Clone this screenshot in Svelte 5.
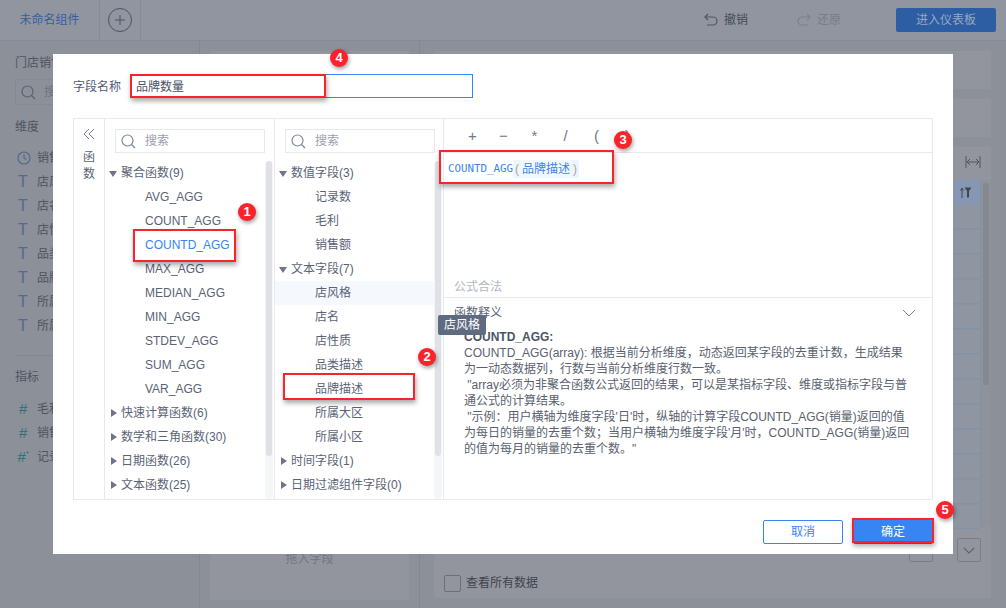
<script>
  const dims = ['店风格', '店名', '店性质', '品类描述', '品牌描述', '所属大区', '所属小区'];
  const measures = [
    { name: '毛利', star: false },
    { name: '销售额', star: false },
    { name: '记录数', star: true },
  ];
  const rows = Array.from({ length: 13 });

  const funcs = [
    { type: 'group', open: true, text: '聚合函数(9)' },
    { text: 'AVG_AGG' },
    { text: 'COUNT_AGG' },
    { text: 'COUNTD_AGG', active: true },
    { text: 'MAX_AGG' },
    { text: 'MEDIAN_AGG' },
    { text: 'MIN_AGG' },
    { text: 'STDEV_AGG' },
    { text: 'SUM_AGG' },
    { text: 'VAR_AGG' },
    { type: 'group', text: '快速计算函数(6)' },
    { type: 'group', text: '数学和三角函数(30)' },
    { type: 'group', text: '日期函数(26)' },
    { type: 'group', text: '文本函数(25)' },
  ];

  const fields = [
    { type: 'group', open: true, text: '数值字段(3)' },
    { text: '记录数' },
    { text: '毛利' },
    { text: '销售额' },
    { type: 'group', open: true, text: '文本字段(7)' },
    { text: '店风格', hover: true },
    { text: '店名' },
    { text: '店性质' },
    { text: '品类描述' },
    { text: '品牌描述' },
    { text: '所属大区' },
    { text: '所属小区' },
    { type: 'group', text: '时间字段(1)' },
    { type: 'group', text: '日期过滤组件字段(0)' },
  ];

  const ops = ['+', '−', '*', '/', '(', ')'];

  const help = [
    'COUNTD_AGG(array): 根据当前分析维度，动态返回某字段的去重计数，生成结果',
    '为一动态数据列，行数与当前分析维度行数一致。',
    ' "array必须为非聚合函数公式返回的结果，可以是某指标字段、维度或指标字段与普',
    '通公式的计算结果。',
    ` "示例：用户横轴为维度字段'日'时，纵轴的计算字段COUNTD_AGG(销量)返回的值`,
    `为每日的销量的去重个数；当用户横轴为维度字段'月'时，COUNTD_AGG(销量)返回`,
    '的值为每月的销量的去重个数。"',
  ];

  const marks = [
    { n: 4, x: 130, y: 74, w: 196, h: 24, cx: 339, cy: 58 },
    { n: 1, x: 133, y: 229, w: 103, h: 33, cx: 247, cy: 212 },
    { n: 2, x: 283, y: 373, w: 132, h: 27, cx: 427, cy: 357 },
    { n: 3, x: 439, y: 150, w: 175, h: 34, cx: 623, cy: 140 },
    { n: 5, x: 852, y: 518, w: 82, h: 25, cx: 945, cy: 510 },
  ];
</script>

{#snippet searchIcon(color)}
  <svg width="15" height="15" viewBox="0 0 15 15" fill="none" stroke={color} stroke-width="1.2">
    <circle cx="6.5" cy="6.5" r="5.5" />
    <path d="M10.5 10.5 L14 14" />
  </svg>
{/snippet}

{#snippet tree(items)}
  <div class="search">
    {@render searchIcon('#7d8899')}
    <span>搜索</span>
  </div>
  <div class="tree">
    {#each items as item}
      {#if item.type === 'group'}
        <div class="row group">
          <i class={item.open ? 'tri open' : 'tri'}></i>
          <span>{item.text}</span>
        </div>
      {:else}
        <div class="row leaf" class:active={item.active} class:hover={item.hover}>{item.text}</div>
      {/if}
    {/each}
  </div>
  <div class="track"><div class="thumb"></div></div>
{/snippet}

<div class="app">
  <header class="top">
    <div class="tab">未命名组件</div>
    <div class="add">
      <span class="plus">
        <svg width="24" height="24" viewBox="0 0 24 24" fill="none" stroke="#4a5266" stroke-width="1">
          <circle cx="12" cy="12" r="11.5" />
          <path d="M12 7v10M7 12h10" />
        </svg>
      </span>
    </div>
    <div class="actions">
      <span class="act">
        <svg width="14" height="14" viewBox="0 0 14 14" fill="none" stroke="#50565f" stroke-width="1.2">
          <path d="M1 4h8a4 4 0 0 1 0 8H3" />
          <path d="M4 1L1 4l3 3" />
        </svg>
        撤销
      </span>
      <span class="act off">
        <svg width="14" height="14" viewBox="0 0 14 14" fill="none" stroke="#7d828b" stroke-width="1.2">
          <path d="M13 4H5a4 4 0 0 0 0 8h6" />
          <path d="M10 1l3 3-3 3" />
        </svg>
        还原
      </span>
      <span class="enter">进入仪表板</span>
    </div>
  </header>

  <div class="body">
    <aside class="side">
      <div class="side-title">门店销售数据</div>
      <div class="side-search">
        {@render searchIcon('#5a6272')}
        <span>搜索</span>
      </div>
      <div class="side-head">维度</div>
      <div class="side-row">
        <svg class="clock" width="14" height="14" viewBox="0 0 14 14" fill="none" stroke="#56698c" stroke-width="1.2">
          <circle cx="7" cy="7" r="6" />
          <path d="M7 3.5V7l2.5 1.5" />
        </svg>
        <span>销售日期</span>
      </div>
      {#each dims as d}
        <div class="side-row"><b class="t">T</b><span>{d}</span></div>
      {/each}
      <div class="side-line"></div>
      <div class="side-head">指标</div>
      {#each measures as m}
        <div class="side-row">
          <b class="hash">#{#if m.star}<sup>*</sup>{/if}</b><span>{m.name}</span>
        </div>
      {/each}
    </aside>

    <section class="drop">
      <div class="drop-box"><span>拖入字段</span></div>
    </section>

    <main class="main">
      <div class="bar"></div>
      <div class="bar"></div>
      <div class="grid-panel">
        <div class="grid-tools">
          <svg width="16" height="12" viewBox="0 0 16 12" fill="none" stroke="#4f555f" stroke-width="1">
            <path d="M1 0v12M15 0v12M2 6h12M5 3L2 6l3 3M11 3l3 3-3 3" />
          </svg>
        </div>
        <div class="grid-wrap">
          <div class="grid">
            <div class="grid-head">
              <svg width="12" height="11" viewBox="0 0 12 11" fill="none" stroke="#3f4650">
                <path d="M2 11V2M0.5 3.5L2 1l1.5 2.5" />
                <path d="M4.5 0.5h7L9 4v6.5H7V4z" fill="#3f4650" stroke="none" />
              </svg>
            </div>
            {#each rows as _}
              <div class="grid-row"></div>
            {/each}
          </div>
          <div class="grid-scroll"></div>
        </div>
        <div class="grid-foot">
          <label class="check"><i></i>查看所有数据</label>
          <div class="pager">
            <span class="pbtn"></span>
            <span class="pbtn">
              <svg width="12" height="7" viewBox="0 0 14 8" fill="none" stroke="#555b66" stroke-width="1.3">
                <path d="M1 1l6 6 6-6" />
              </svg>
            </span>
          </div>
        </div>
      </div>
    </main>
  </div>

  <div class="modal">
    <div class="name-row">
      <span class="name-label">字段名称</span>
      <div class="name-input">品牌数量</div>
    </div>

    <div class="editor">
      <div class="fold">
        <svg width="14" height="12" viewBox="0 0 14 12" fill="none" stroke="#7a8496" stroke-width="1">
          <path d="M7 1L2 6l5 5M12 1L7 6l5 5" />
        </svg>
        <span>函</span>
        <span>数</span>
      </div>
      <div class="col">{@render tree(funcs)}</div>
      <div class="col">{@render tree(fields)}</div>
      <div class="formula">
        <div class="ops">
          {#each ops as o}
            <span>{o}</span>
          {/each}
        </div>
        <div class="code">
          <span class="fn">COUNTD_AGG</span><span class="args"><em>(</em><span>品牌描述</span><em>)</em></span>
        </div>
        <div class="valid">公式合法</div>
        <div class="help-head">
          <span>函数释义</span>
          <svg width="14" height="8" viewBox="0 0 14 8" fill="none" stroke="#7a8496" stroke-width="1">
            <path d="M1 1l6 6 6-6" />
          </svg>
        </div>
        <div class="help">
          <div class="help-title">COUNTD_AGG:</div>
          {#each help as line}
            <div class="help-line">{line}</div>
          {/each}
        </div>
      </div>
    </div>

    <div class="foot">
      <button class="btn">取消</button>
      <button class="btn primary">确定</button>
    </div>
  </div>

  <div class="tip">店风格</div>

  {#each marks as m}
    <div class="mark" style="left:{m.x}px;top:{m.y}px;width:{m.w}px;height:{m.h}px"></div>
    <div class="num" style="left:{m.cx - 9}px;top:{m.cy - 9}px">{m.n}</div>
  {/each}
</div>

<style>
  :global(body) {
    margin: 0;
  }

  .app {
    position: relative;
    width: 1006px;
    height: 608px;
    overflow: hidden;
    display: flex;
    flex-direction: column;
    background: #8b9099;
    color: #4f5460;
    font: 12px/16px 'Liberation Sans', 'Noto Sans CJK SC', sans-serif;
  }

  /* dimmed page */
  .top {
    height: 40px;
    flex: none;
    display: flex;
    background: #9195a0;
    border-bottom: 1px solid #858a94;
  }
  .tab {
    width: 100px;
    line-height: 40px;
    text-align: center;
    color: #34609f;
    border-right: 1px solid #868b96;
    box-sizing: border-box;
  }
  .add {
    width: 41px;
    display: flex;
    align-items: center;
    justify-content: center;
    border-right: 1px solid #868b96;
    box-sizing: border-box;
  }
  .plus {
    display: flex;
  }
  .actions {
    flex: 1;
    display: flex;
    align-items: center;
    padding-left: 563px;
  }
  .act {
    display: flex;
    align-items: center;
    gap: 6px;
    width: 93px;
    color: #474c56;
    font-size: 12px;
  }
  .act.off {
    width: 99px;
    color: #787d88;
  }
  .enter {
    width: 100px;
    height: 24px;
    line-height: 24px;
    text-align: center;
    background: #2d5da2;
    color: #98a8c2;
    border-radius: 2px;
    font-size: 12px;
  }

  .body {
    flex: 1;
    display: flex;
    min-height: 0;
  }
  .side {
    width: 200px;
    box-sizing: border-box;
    padding: 14px 15px 0;
    border-right: 1px solid #838892;
    flex: none;
  }
  .side-title {
    line-height: 16px;
  }
  .side-search {
    margin-top: 8px;
    height: 26px;
    box-sizing: border-box;
    border: 1px solid #858a94;
    display: flex;
    align-items: center;
    gap: 8px;
    padding-left: 5px;
    color: #6f7480;
  }
  .side-head {
    margin-top: 14px;
    line-height: 16px;
    margin-bottom: 11px;
  }
  .side-line + .side-head {
    margin-top: 13px;
    margin-bottom: 12px;
  }
  .side-row {
    height: 24px;
    display: flex;
    align-items: center;
    gap: 6px;
  }
  .clock {
    margin-left: 2px;
  }
  .t {
    width: 16px;
    text-align: center;
    font-size: 16px;
    font-weight: normal;
    color: #56698c;
  }
  .hash {
    width: 16px;
    text-align: center;
    font-size: 15px;
    font-weight: normal;
    font-style: italic;
    color: #32707a;
    white-space: nowrap;
  }
  .hash sup {
    font-size: 8px;
    line-height: 0;
  }
  .side-line {
    height: 1px;
    background: #838892;
    margin-top: 17px;
  }

  .drop {
    width: 220px;
    flex: none;
    box-sizing: border-box;
    padding: 10px;
    border-right: 1px solid #838892;
    margin-bottom: 0;
  }
  .drop-box {
    height: 549px;
    background: #92959e;
    text-align: center;
    padding-top: 500px;
    box-sizing: border-box;
    color: #737781;
  }

  .main {
    flex: 1;
    padding: 10px 15px 10px 14px;
    display: flex;
    flex-direction: column;
    gap: 10px;
    min-width: 0;
  }
  .bar {
    height: 38px;
    background: #92959e;
  }
  .grid-panel {
    flex: 1;
    background: #92959e;
    display: flex;
    flex-direction: column;
  }
  .grid-tools {
    height: 29px;
    padding-bottom: 4px;
    flex: none;
    display: flex;
    align-items: center;
    justify-content: flex-end;
    padding-right: 10px;
  }
  .grid-wrap {
    height: 347px;
    flex: none;
    display: flex;
    gap: 2px;
    background: #8d929b;
  }
  .grid {
    flex: 1;
    border-right: 1px solid #8492a9;
  }
  .grid-head {
    height: 25px;
    background: #8597b2;
    display: flex;
    align-items: center;
    justify-content: flex-end;
    padding-right: 8px;
  }
  .grid-row {
    height: 24px;
    box-sizing: border-box;
    background: #8f96a1;
    border-bottom: 1px solid #8492a9;
    margin-bottom: 1px;
  }
  .grid-scroll {
    width: 6px;
    height: 202px;
    margin: 3px 2px 0 0;
    border-radius: 3px;
    background: #84888f;
  }
  .grid-foot {
    flex: 1;
    display: flex;
    justify-content: space-between;
    padding: 11px 10px 0 10px;
    position: relative;
  }
  .check {
    display: flex;
    align-items: center;
    gap: 5px;
    height: 18px;
    margin-top: 36px;
    color: #3f434c;
  }
  .check i {
    width: 15px;
    height: 15px;
    border: 1px solid #6a6f79;
    border-radius: 2px;
  }
  .pager {
    display: flex;
    gap: 24px;
  }
  .pbtn {
    width: 24px;
    height: 24px;
    box-sizing: border-box;
    border: 1px solid #7a7e88;
    border-radius: 2px;
    display: flex;
    align-items: center;
    justify-content: center;
  }

  /* dialog */
  .modal {
    position: absolute;
    left: 53px;
    top: 54px;
    width: 900px;
    height: 500px;
    box-sizing: border-box;
    padding: 20px 20px 0;
    background: #fff;
    display: flex;
    flex-direction: column;
    color: #5a6376;
  }
  .name-row {
    display: flex;
    align-items: center;
    height: 24px;
  }
  .name-label {
    width: 57px;
    color: #525c70;
    padding-top: 2px;
  }
  .name-input {
    width: 343px;
    height: 24px;
    box-sizing: border-box;
    border: 1px solid #3685f2;
    padding-left: 5px;
    line-height: 24px;
    color: #4a5266;
  }
  .editor {
    margin-top: 20px;
    height: 382px;
    display: flex;
    box-sizing: border-box;
    border: 1px solid #e8e9ec;
  }
  .fold {
    width: 31px;
    flex: none;
    box-sizing: border-box;
    border-right: 1px solid #e8e9ec;
    display: flex;
    flex-direction: column;
    align-items: center;
    padding-top: 9px;
    gap: 1px;
  }
  .fold svg {
    margin-bottom: 8px;
  }
  .col {
    position: relative;
    width: 170px;
    flex: none;
    box-sizing: border-box;
    border-right: 1px solid #e8e9ec;
  }
  .col + .col {
    width: 169px;
  }
  .search {
    margin: 10px 0 0 10px;
    width: 150px;
    height: 24px;
    box-sizing: border-box;
    border: 1px solid #e8e9ec;
    display: flex;
    align-items: center;
    gap: 9px;
    padding-left: 5px;
    color: #9aa1ae;
  }
  .tree {
    margin-top: 8px;
  }
  .row {
    height: 24px;
    line-height: 24px;
    white-space: nowrap;
  }
  .group {
    display: flex;
    align-items: center;
    padding-left: 4px;
    gap: 3px;
  }
  .tri {
    width: 9px;
    height: 9px;
    flex: none;
    position: relative;
  }
  .tri::before {
    content: '';
    position: absolute;
    left: 2px;
    top: 0;
    border-style: solid;
    border-width: 4.5px 0 4.5px 6px;
    border-color: transparent transparent transparent #6c7689;
  }
  .tri.open::before {
    left: 0;
    top: 2px;
    border-width: 6px 4.5px 0;
    border-color: #6c7689 transparent transparent;
  }
  .leaf {
    padding-left: 40px;
    margin-right: 9px;
  }
  .leaf.active {
    color: #3685f2;
  }
  .leaf.hover {
    background: #f5f8fd;
  }
  .track {
    position: absolute;
    right: 1px;
    top: 42px;
    bottom: 0;
    width: 8px;
    border-radius: 4px;
    background: #f5f6f7;
  }
  .thumb {
    margin-left: 1px;
    width: 6px;
    height: 295px;
    border-radius: 3px;
    background: #dfe1e6;
  }
  .formula {
    flex: 1;
    min-width: 0;
    display: flex;
    flex-direction: column;
  }
  .ops {
    height: 34px;
    flex: none;
    box-sizing: border-box;
    border-bottom: 1px solid #e8e9ec;
    display: flex;
    padding-left: 18px;
    color: #6f798c;
    font-size: 15px;
    line-height: 34px;
  }
  .ops span {
    width: 31px;
    text-align: center;
    margin-left: -5px;
    margin-right: 5px;
  }
  .code {
    height: 123px;
    flex: none;
    padding: 7px 0 0 4px;
    box-sizing: border-box;
    white-space: nowrap;
    display: flex;
    align-items: flex-start;
  }
  .fn {
    font-family: 'DejaVu Sans Mono', monospace;
    color: #3b86e8;
    font-size: 10.8px;
    line-height: 18px;
  }
  .args {
    display: flex;
    background: #eff5fc;
    color: #3b86e8;
    line-height: 18px;
  }
  .args em {
    font-style: normal;
    color: #a8a78e;
    width: 8px;
    text-align: center;
  }
  .args span {
    background: #f3f8fe;
    padding: 0 1px;
  }
  .valid {
    height: 22px;
    flex: none;
    box-sizing: border-box;
    padding-left: 10px;
    line-height: 22px;
    color: #b3b7bf;
    border-bottom: 1px solid #e8e9ec;
  }
  .help-head {
    height: 30px;
    flex: none;
    display: flex;
    align-items: center;
    justify-content: space-between;
    padding: 0 16px 0 10px;
  }
  .help {
    padding-left: 20px;
    margin-top: 1px;
    color: #59626f;
  }
  .help-line {
    white-space: pre;
  }
  .help-title {
    font-weight: bold;
    color: #4c5464;
  }
  .foot {
    display: flex;
    justify-content: flex-end;
    gap: 10px;
    margin-top: 20px;
  }
  .btn {
    width: 80px;
    height: 24px;
    padding: 0;
    box-sizing: border-box;
    border: 1px solid #3685f2;
    border-radius: 2px;
    background: #fff;
    color: #3685f2;
    font: inherit;
  }
  .btn.primary {
    background: #3685f2;
    color: #fff;
  }

  /* overlays */
  .tip {
    position: absolute;
    left: 438px;
    top: 315px;
    width: 48px;
    height: 20px;
    line-height: 20px;
    text-align: center;
    background: #5f6b80;
    color: #fff;
    border-radius: 2px;
  }
  .mark {
    position: absolute;
    box-sizing: border-box;
    border: 2px solid #f9232c;
    box-shadow: 1px 3px 5px rgba(0, 0, 0, 0.35);
  }
  .num {
    position: absolute;
    width: 18px;
    height: 18px;
    border-radius: 50%;
    background: #f9232c;
    color: #fff;
    text-align: center;
    line-height: 18px;
    font-size: 13px;
    font-weight: bold;
    box-shadow: 1px 2px 4px rgba(0, 0, 0, 0.4);
  }
</style>
